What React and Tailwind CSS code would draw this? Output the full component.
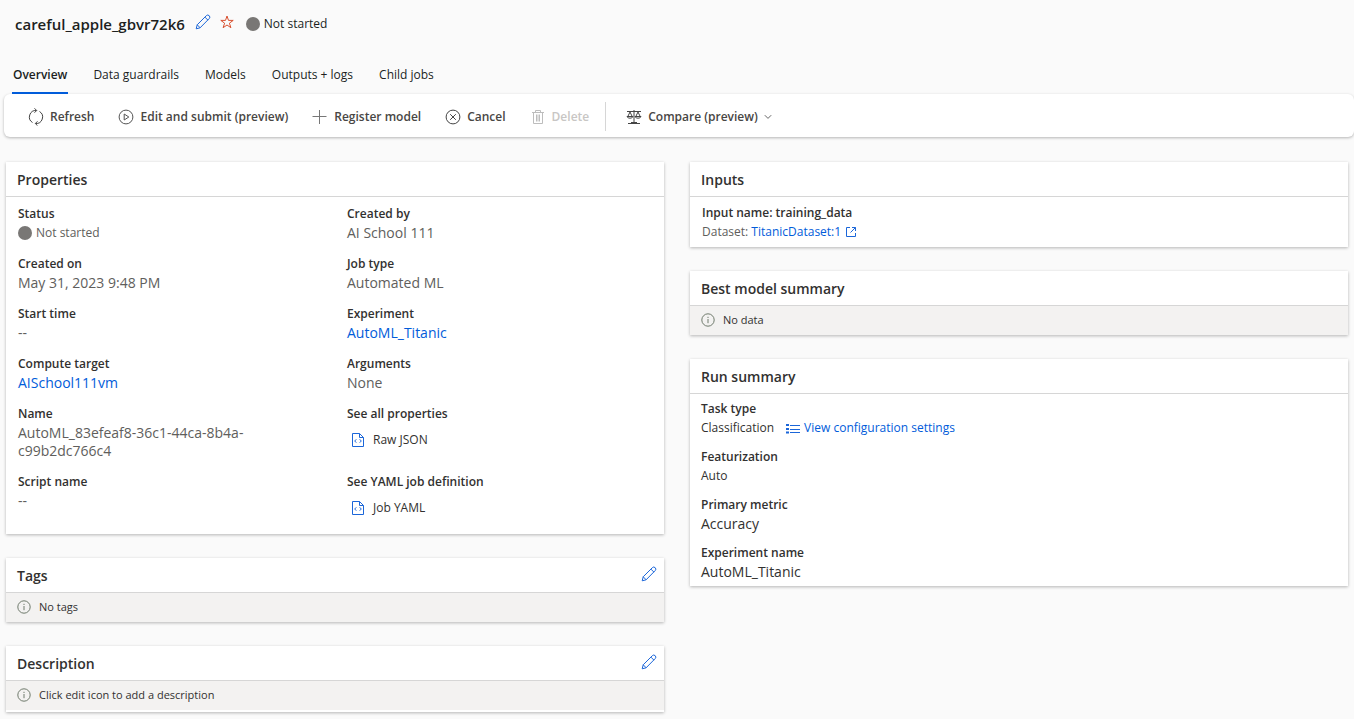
import { useState } from 'react'

const tabs = ['Overview', 'Data guardrails', 'Models', 'Outputs + logs', 'Child jobs']

function PencilIcon(){
    return(
        <svg width="16" height="16" viewBox="0 0 16 16" fill="none" stroke="#1b66d9" strokeLinejoin="round">
            <path d="M1.200 14.800l1-4L11.300 1.700a1.900 1.900 0 0 1 2.900 2.900L5.100 13.800z" />
            <path d="M2.200 10.800l3 3M9.900 3.100l3 3" />
        </svg>
    )
}

function StarIcon(){
    return(
        <svg width="16" height="16" viewBox="0 0 16 16" fill="none" stroke="#d8502f">
            <path d="M8 2l1.500 4.400h4.700l-3.800 2.800 1.500 4.500L8 11l-3.900 2.700 1.500-4.500-3.800-2.800h4.700z" />
        </svg>
    )
}

function RefreshIcon(){
    return(
        <svg width="16" height="18" viewBox="0 0 16 18" fill="none" stroke="#444">
            <path d="M8.500 2.500A6.500 6.500 0 0 0 4.500 14.500M11.500 3.500A6.500 6.500 0 0 1 7.500 15.500" />
            <path d="M6.500 0.300L8.700 2.500 6.500 4.700M9.500 13.300L7.300 15.500l2.200 2.200" />
        </svg>
    )
}

function PlayIcon(){
    return(
        <svg width="16" height="16" viewBox="0 0 16 16" fill="none" stroke="#555">
            <circle cx="8" cy="8" r="6.900" />
            <path d="M6.200 5v6l4.600-3z" />
        </svg>
    )
}

function PlusIcon(){
    return(
        <svg width="16" height="16" viewBox="0 0 16 16" fill="none" stroke="#777">
            <path d="M7.500 1v14M0.500 7.500h14" />
        </svg>
    )
}

function CancelIcon(){
    return(
        <svg width="16" height="16" viewBox="0 0 16 16" fill="none" stroke="#444">
            <circle cx="8" cy="8" r="6.900" />
            <path d="M5.200 5.200l5.600 5.600M10.800 5.200l-5.600 5.600" />
        </svg>
    )
}

function TrashIcon(){
    return(
        <svg width="16" height="16" viewBox="0 0 16 16" fill="none" stroke="#bdbdbd">
            <path d="M2 3.500h12M5.500 3.500v-2h5v2M3.500 3.500v11h9v-11M6.500 5.500v7M8 5.500v7M9.500 5.500v7" />
        </svg>
    )
}

function ScaleIcon(){
    return(
        <svg width="16" height="16" viewBox="0 0 16 16" fill="none" stroke="#444">
            <path d="M1 2.500h14M8 1v13M2 14.500h12M5 13.500h6" />
            <path d="M4 3L1.800 7.500M4 3l2.200 4.500M12 3L9.800 7.500M12 3l2.200 4.500" />
            <path d="M1 7.500h6c-.5 2.200-5.500 2.200-6 0zM9 7.500h6c-.5 2.200-5.500 2.200-6 0z" />
        </svg>
    )
}

function ChevronIcon(){
    return(
        <svg width="8" height="8" viewBox="0 0 8 8" fill="none" stroke="#666">
            <path d="M0.800 2.200L4 5.400l3.200-3.200" />
        </svg>
    )
}

function CodeFileIcon(){
    return(
        <svg width="14" height="14" viewBox="0 0 14 14" fill="none" stroke="#1b66d9">
            <path d="M1.500 0.500h7l4 4v9h-11zM8.500 0.500v4h4" />
            <path d="M5.300 6.300L3.700 8l1.600 1.700M8.700 6.300L10.300 8 8.700 9.700" />
        </svg>
    )
}

function InfoIcon(){
    return(
        <svg width="14" height="14" viewBox="0 0 14 14" fill="none" stroke="#6f7a6c">
            <circle cx="7" cy="7" r="6.200" />
            <path d="M7 6v4.200M7 3.800v1.200" />
        </svg>
    )
}

function OpenIcon(){
    return(
        <svg width="12" height="12" viewBox="0 0 12 12" fill="none" stroke="#1b66d9">
            <path d="M5 1.500H1.500v9h9V7M7 1.500h3.500V5M10.500 1.500l-5 5" />
        </svg>
    )
}

function ListIcon(){
    return(
        <svg width="14" height="12" viewBox="0 0 14 12" fill="none" stroke="#1b66d9">
            <path d="M4 3.500h10M4 7.500h10M4 10.500h10" />
            <path d="M0 3h3M0 7h3M0 10.500h3" strokeWidth="2" />
        </svg>
    )
}

function Status({ className }){
    return(
        <span className={className}>
            <span className="size-[14px] rounded-full bg-[#797775]" />
            Not started
        </span>
    )
}

function ToolButton({ icon, children, disabled }){
    return(
        <button
            disabled={disabled}
            className="flex items-center gap-[6px] font-semibold text-[#484644] disabled:text-[#c8c6c4]"
        >
            {icon}
            {children}
        </button>
    )
}

function Card({ title, editLabel, children }){
    return(
        <section className="bg-white shadow-[0_1px_3px_rgba(0,0,0,0.28)]">
            <div className="flex h-[35px] items-center justify-between border-b border-[#d6d6d6] pl-[11px] pr-[7px] pt-px">
                <h2 className="text-[14px] font-semibold text-[#323130]">{title}</h2>
                {editLabel && <button aria-label={editLabel} className="pb-[3px]"><PencilIcon /></button>}
            </div>
            {children}
        </section>
    )
}

function EmptyBar({ children }){
    return(
        <div className="flex h-[29px] items-center gap-2 bg-[#f3f2f1] pl-[11px] pb-px text-[11px] text-[#323130]">
            <InfoIcon />
            {children}
        </div>
    )
}

function Field({ label, large, children }){
    return(
        <div>
            <dt className="leading-5 font-semibold text-[#323130]">{label}</dt>
            <dd className={large ? 'text-[14px] leading-[18px]' : 'leading-[18px]'}>{children}</dd>
        </div>
    )
}

function FileButton({ children }){
    return(
        <button className="flex h-8 items-center gap-2 pl-1 text-[12px] text-[#323130]">
            <CodeFileIcon />
            {children}
        </button>
    )
}

export default function App(){
    const [active, setActive] = useState('Overview')

    return(
        <div className="min-h-screen bg-[#fafafa] pb-[7px] font-['Open_Sans',sans-serif] text-[12px] text-[#201f1e]">
            <header className="flex h-12 items-center pl-[15px]">
                <h1 className="text-[15px] font-semibold">careful_apple_gbvr72k6</h1>
                <button aria-label="Edit name" className="ml-[10px] pb-1"><PencilIcon /></button>
                <button aria-label="Favorite" className="ml-2 pb-1"><StarIcon /></button>
                <Status className="ml-[11px] flex items-center gap-1" />
            </header>

            <nav className="mt-2 flex h-[38px] gap-6 pl-3">
                {tabs.map(tab => (
                    <button
                        key={tab}
                        onClick={() => setActive(tab)}
                        className={active === tab
                            ? 'border-b-2 border-[#015cda] px-px pt-[2px] font-semibold'
                            : 'border-b-2 border-transparent px-px pt-[2px]'}
                    >
                        {tab}
                    </button>
                ))}
            </nav>

            <div className="ml-1 flex h-[43px] items-center gap-6 rounded-md bg-white pt-[2px] pl-6 shadow-[0_1px_3px_rgba(0,0,0,0.28)]">
                <ToolButton icon={<RefreshIcon />}>Refresh</ToolButton>
                <ToolButton icon={<PlayIcon />}>Edit and submit (preview)</ToolButton>
                <ToolButton icon={<PlusIcon />}>Register model</ToolButton>
                <ToolButton icon={<CancelIcon />}>Cancel</ToolButton>
                <div className="flex items-center">
                    <ToolButton icon={<TrashIcon />} disabled>Delete</ToolButton>
                    <div className="ml-4 mr-5 h-[29px] w-px bg-[#d6d6d6]" />
                    <ToolButton icon={<ScaleIcon />}>
                        Compare (preview)
                        <ChevronIcon />
                    </ToolButton>
                </div>
            </div>

            <main className="mt-[25px] grid grid-cols-2 items-start gap-[26px] px-[6px]">
                <div className="flex flex-col gap-6">
                    <Card title="Properties">
                        <dl className="grid grid-cols-2 gap-y-3 pt-[7px] pb-[10px] text-[#605e5c] *:pl-3">
                            <Field label="Status"><Status className="flex items-center gap-1" /></Field>
                            <Field label="Created by" large>AI School 111</Field>
                            <Field label="Created on" large>May 31, 2023 9:48 PM</Field>
                            <Field label="Job type" large>Automated ML</Field>
                            <Field label="Start time" large>--</Field>
                            <Field label="Experiment" large><a href="#" className="text-[#015cda]">AutoML_Titanic</a></Field>
                            <Field label="Compute target" large><a href="#" className="text-[#015cda]">AISchool111vm</a></Field>
                            <Field label="Arguments" large>None</Field>
                            <Field label="Name" large>
                                <span className="block max-w-[260px]">AutoML_83efeaf8-36c1-44ca-8b4a-c99b2dc766c4</span>
                            </Field>
                            <Field label="See all properties"><FileButton>Raw JSON</FileButton></Field>
                            <Field label="Script name" large>--</Field>
                            <Field label="See YAML job definition"><FileButton>Job YAML</FileButton></Field>
                        </dl>
                    </Card>
                    <Card title="Tags" editLabel="Edit tags">
                        <EmptyBar>No tags</EmptyBar>
                    </Card>
                    <Card title="Description" editLabel="Edit description">
                        <EmptyBar>Click edit icon to add a description</EmptyBar>
                        <div className="h-[2px]" />
                    </Card>
                </div>

                <div className="flex flex-col gap-6">
                    <Card title="Inputs">
                        <dl className="py-[6px] pl-3 text-[#605e5c]">
                            <Field label="Input name: training_data">
                                Dataset:{' '}
                                <a href="#" className="inline-flex items-center gap-1 text-[#015cda]">
                                    TitanicDataset:1
                                    <OpenIcon />
                                </a>
                            </Field>
                        </dl>
                    </Card>
                    <Card title="Best model summary">
                        <EmptyBar>No data</EmptyBar>
                    </Card>
                    <Card title="Run summary">
                        <dl className="flex flex-col gap-[10px] py-[5px] pl-[11px] text-[#323130]">
                            <Field label="Task type">
                                <span className="flex items-center gap-3">
                                    Classification
                                    <a href="#" className="flex items-center gap-1 text-[#015cda]">
                                        <ListIcon />
                                        View configuration settings
                                    </a>
                                </span>
                            </Field>
                            <Field label="Featurization">Auto</Field>
                            <Field label="Primary metric" large>Accuracy</Field>
                            <Field label="Experiment name" large>AutoML_Titanic</Field>
                        </dl>
                    </Card>
                </div>
            </main>
        </div>
    )
}
